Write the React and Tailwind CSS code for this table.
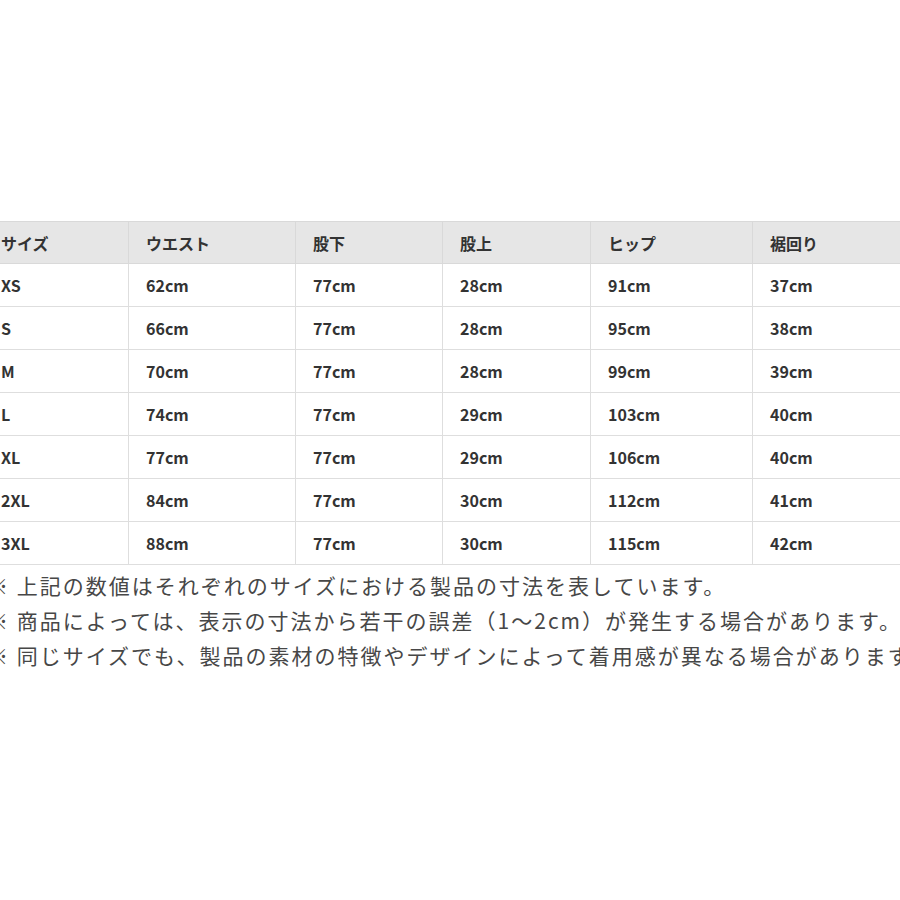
const headers = ['サイズ', 'ウエスト', '股下', '股上', 'ヒップ', '裾回り']

const rows = [
  ['XS', '62cm', '77cm', '28cm', '91cm', '37cm'],
  ['S', '66cm', '77cm', '28cm', '95cm', '38cm'],
  ['M', '70cm', '77cm', '28cm', '99cm', '39cm'],
  ['L', '74cm', '77cm', '29cm', '103cm', '40cm'],
  ['XL', '77cm', '77cm', '29cm', '106cm', '40cm'],
  ['2XL', '84cm', '77cm', '30cm', '112cm', '41cm'],
  ['3XL', '88cm', '77cm', '30cm', '115cm', '42cm'],
]

const widths = ['w-[145px]', 'w-[167px]', 'w-[147px]', 'w-[148px]', 'w-[162px]', 'w-[170px]']

const notes = [
  '※ 上記の数値はそれぞれのサイズにおける製品の寸法を表しています。',
  '※ 商品によっては、表示の寸法から若干の誤差（1～2cm）が発生する場合があります。',
  '※ 同じサイズでも、製品の素材の特徴やデザインによって着用感が異なる場合があります。',
]

export default function App() {
  return (
    <div className="w-[900px] h-[900px] bg-white overflow-hidden pt-[221px] font-['Noto_Sans_CJK_JP','Noto_Sans',sans-serif]">
      <div className="-ml-[17px] w-[939px]">
        <table className="border-collapse table-fixed w-[939px] text-[16px] font-semibold text-[#333]">
          <thead>
            <tr className="bg-[#e6e6e6]">
              {headers.map((h, i) => (
                <th key={i} className={`${widths[i]} h-[42px] border border-[#d9d9d9] pl-[17px] text-left font-semibold`}>{h}</th>
              ))}
            </tr>
          </thead>
          <tbody>
            {rows.map((r, i) => (
              <tr key={i}>
                {r.map((c, j) => (
                  <td key={j} className="h-[43px] border border-[#dedede] pl-[17px]">{c}</td>
                ))}
              </tr>
            ))}
          </tbody>
        </table>
      </div>
      <div className="-ml-[13px] mt-[3px] whitespace-nowrap text-[21px] leading-[35px] tracking-[2px] text-[#474747]">
        {notes.map((n, i) => <p key={i}>{n}</p>)}
      </div>
    </div>
  )
}
